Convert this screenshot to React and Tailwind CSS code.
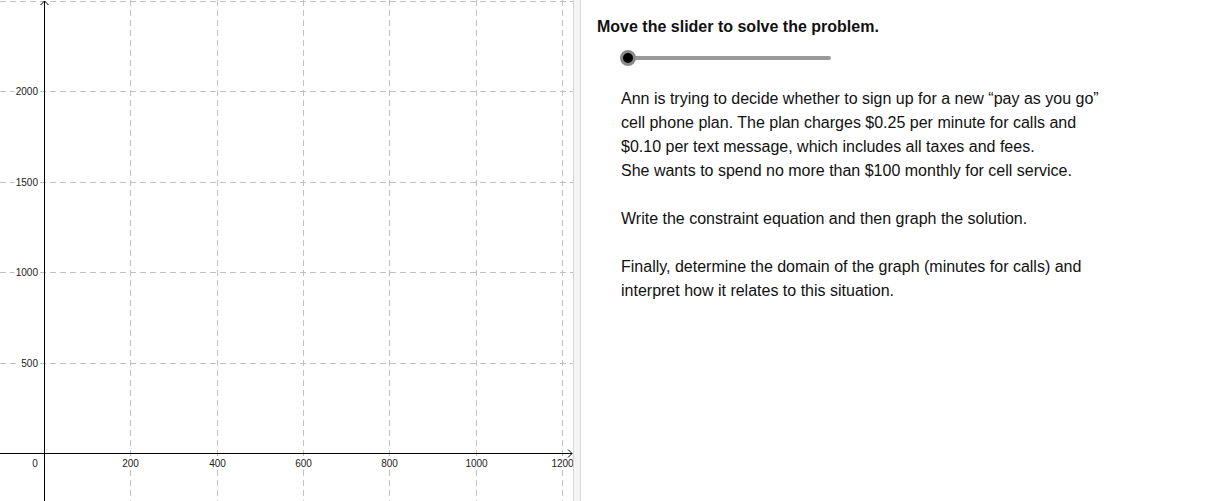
import React from "react";

const X0 = 44;
const Y0 = 453;
const XSTEP = 86.3;
const YSTEP = 90.5;

const xTicks = [200, 400, 600, 800, 1000, 1200];
const yTicks = [500, 1000, 1500, 2000];

const Graph = () => (
  <svg width="573" height="501" className="block" style={{ fontFamily: "'Liberation Sans', Arial, sans-serif" }}>
    <rect width="573" height="501" fill="#fff" />
    {/* grid */}
    {xTicks.map((t, i) => {
      const x = Math.round(X0 + XSTEP * (i + 1)) + 0.5;
      return <line key={t} x1={x} y1="0" x2={x} y2="501" stroke="#c0c0c0" strokeDasharray="6 4" />;
    })}
    {[...yTicks, 2500].map((t, i) => {
      const y = Math.round(Y0 - YSTEP * (i + 1)) + 0.5;
      return <line key={t} x1="0" y1={y} x2="573" y2={y} stroke="#c0c0c0" strokeDasharray="6 4" />;
    })}
    {/* axes */}
    <line x1={X0 + 0.5} y1="1" x2={X0 + 0.5} y2="501" stroke="#000" />
    <line x1="0" y1={Y0 + 0.5} x2="572" y2={Y0 + 0.5} stroke="#000" />
    <polyline points={`${X0 - 3.5},5 ${X0 + 0.5},1 ${X0 + 4.5},5`} fill="none" stroke="#000" />
    <polyline points={`568,${Y0 - 3.5} 572,${Y0 + 0.5} 568,${Y0 + 4.5}`} fill="none" stroke="#000" />
    {/* labels */}
    {yTicks.map((t, i) => {
      const y = Math.round(Y0 - YSTEP * (i + 1)) + 0.5;
      const w = String(t).length * 5.6;
      return (
        <g key={t}>
          <rect x={38 - w - 1} y={y - 3} width={w + 2} height="6" fill="#fff" />
          <text x="38" y={y + 3.5} textAnchor="end" fontSize="10" fill="#222">{t}</text>
        </g>
      );
    })}
    <text x="35" y="467" textAnchor="middle" fontSize="10" fill="#222">0</text>
    {xTicks.map((t, i) => {
      const x = Math.round(X0 + XSTEP * (i + 1)) + 0.5;
      const w = String(t).length * 5.6;
      return (
        <g key={t}>
          <rect x={x - w / 2 - 1} y="458" width={w + 2} height="11" fill="#fff" />
          <text x={x} y="467" textAnchor="middle" fontSize="10" fill="#222">{t}</text>
        </g>
      );
    })}
  </svg>
);

const App = () => (
  <div className="flex h-[501px] w-[1215px] overflow-hidden bg-white font-['Liberation_Sans',Arial,sans-serif] text-[#111]">
    <div className="w-[573px] shrink-0 overflow-hidden">
      <Graph />
    </div>
    <div className="w-[8px] shrink-0 border-x border-[#d6d6d6] bg-[#f5f5f5]" />
    <div className="flex-1 pl-[16px] pt-[17px]">
      <h1 className="text-[16px] font-bold leading-[20px]">Move the slider to solve the problem.</h1>
      <div className="relative ml-[23px] mt-[13px] h-[16px] w-[218px]">
        <div className="absolute left-[7px] top-[6px] h-[4px] w-[204px] rounded-full bg-[#9a9a9a]" />
        <div className="absolute left-0 top-0 h-[16px] w-[16px] rounded-full border-[3px] border-[#8a8a8a] bg-black" />
      </div>
      <div className="ml-[24px] mt-[21px] text-[16px] leading-[24px]">
        <p>Ann is trying to decide whether to sign up for a new “pay as you go”</p>
        <p>cell phone plan. The plan charges $0.25 per minute for calls and</p>
        <p>$0.10 per text message, which includes all taxes and fees.</p>
        <p>She wants to spend no more than $100 monthly for cell service.</p>
        <p className="h-[24px]" />
        <p>Write the constraint equation and then graph the solution.</p>
        <p className="h-[24px]" />
        <p>Finally, determine the domain of the graph (minutes for calls) and</p>
        <p>interpret how it relates to this situation.</p>
      </div>
    </div>
  </div>
);

export default App;
